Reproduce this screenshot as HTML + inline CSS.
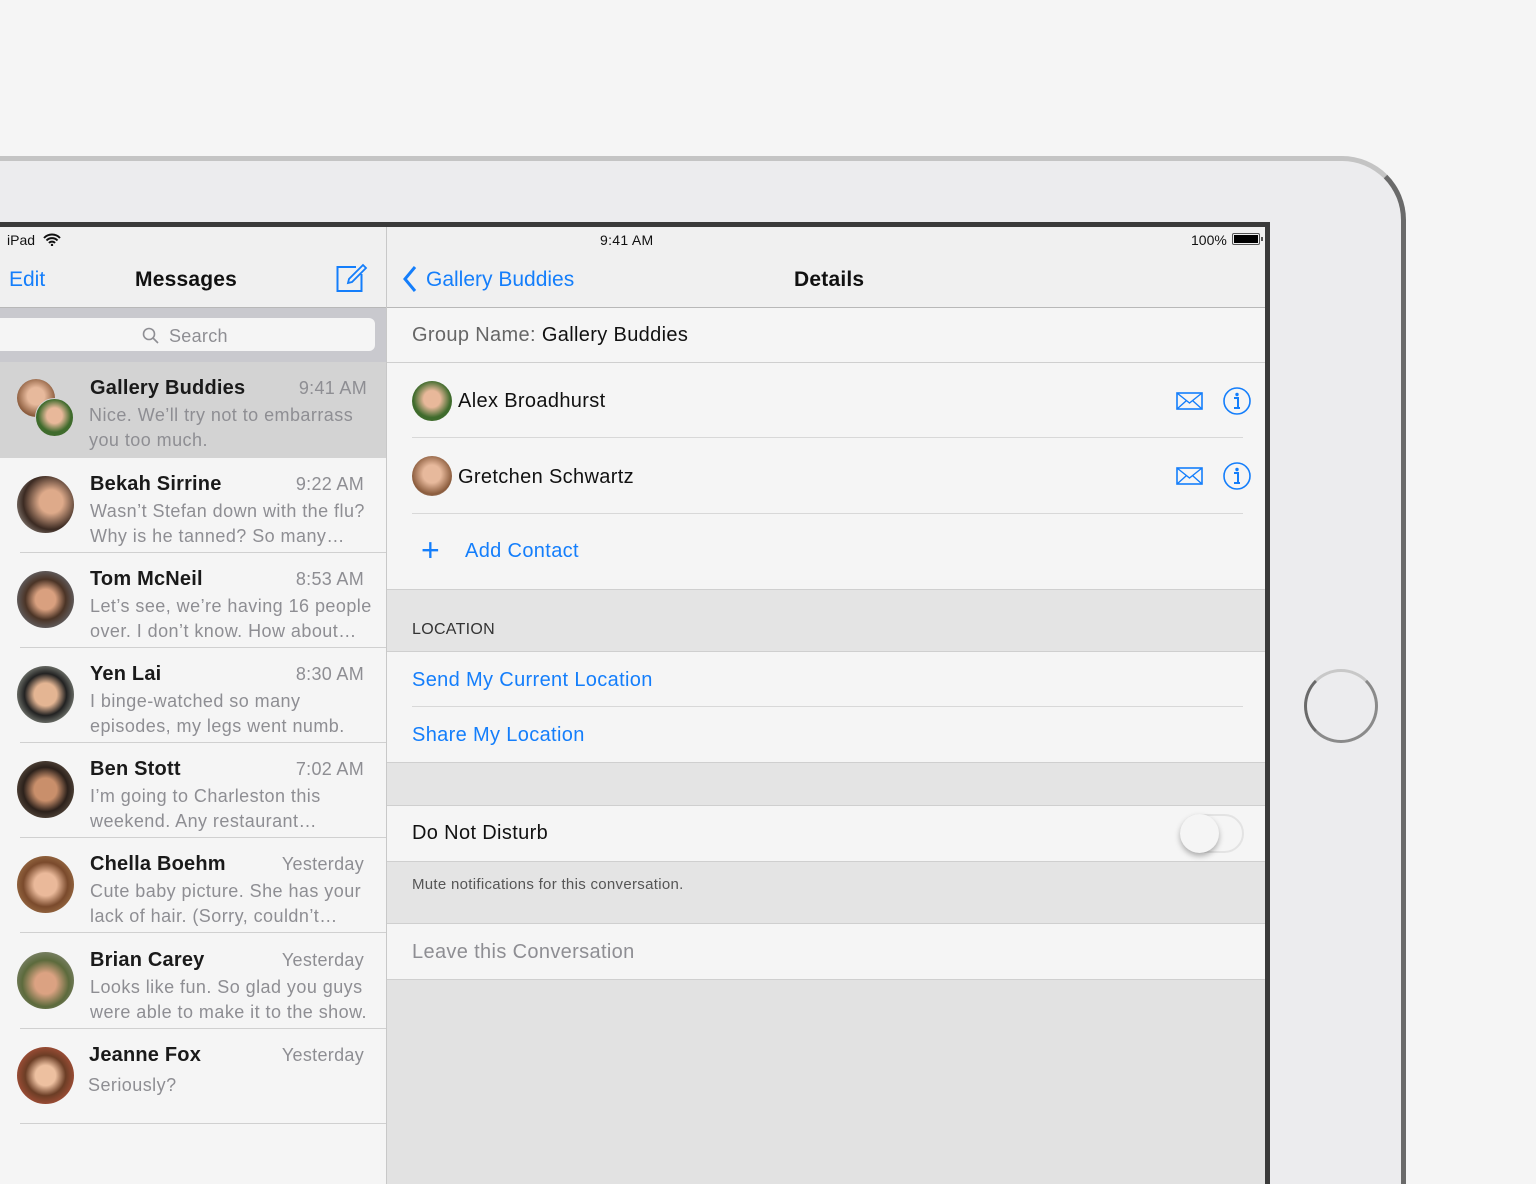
<!DOCTYPE html>
<html style="width:1536px;height:1184px;overflow:hidden"><head><meta charset="utf-8"><style>
*{margin:0;padding:0;box-sizing:border-box}
body{width:1536px;height:1184px;background:#f5f5f5;position:relative;overflow:hidden;font-family:"Liberation Sans",sans-serif;color:#111}
.abs{position:absolute}
#body{left:-80px;top:156px;width:1486px;height:1028px;background:#ececee;border-radius:0 64px 0 0;border-top:5px solid #c4c4c4;border-right:5px solid #6a6a6a}
#screen{left:-10px;top:222px;width:1280px;height:962px;background:#3a3a3a}
#scr{left:0;top:227px;width:1265px;height:957px;background:#f5f5f5;overflow:hidden}
.blue{color:#147efb}
.gray{color:#8e8e93}
.row{position:absolute;left:0;width:386px;height:95px}
.row .av{position:absolute;left:17px;top:18px;width:57px;height:57px;border-radius:50%}
.row .n{position:absolute;left:90px;top:15px;font-size:20px;font-weight:bold;color:#1a1a1a;letter-spacing:0.2px}
.row .t{position:absolute;right:22px;top:16px;font-size:18px;color:#8e8e93;letter-spacing:0.3px}
.row .p{position:absolute;left:90px;top:41px;font-size:18px;line-height:25px;color:#8e8e93;width:290px;letter-spacing:0.45px}
.row .sep{position:absolute;left:20px;right:0;bottom:0;height:1px;background:#d0d0d0}
.cell{position:absolute;left:387px;width:878px;background:#f5f5f5}
.grp{position:absolute;left:387px;width:878px;background:#e4e4e4;border-top:1px solid #cfcfcf;border-bottom:1px solid #cfcfcf}
.ctext{position:absolute;left:25px;font-size:20px;letter-spacing:0.35px}
</style></head><body>
<div id="body" class="abs"></div>
<div class="abs" style="left:1304px;top:669px;width:74px;height:74px;border-radius:50%;border:3px solid #8a8a8a;border-top-color:#c8c8c8;border-left-color:#6a6a6a"></div>
<div id="screen" class="abs"></div>
<div id="scr" class="abs">
  <div class="abs" style="left:0;top:0;width:386px;height:81px;background:#f0f0f0;border-bottom:1px solid #b8b8b8"></div>
  <div class="abs" style="left:7px;top:5px;font-size:14px">iPad</div>
  <svg class="abs" style="left:43px;top:6px" width="18" height="13" viewBox="0 0 18 13"><path d="M1 5a11 11 0 0 1 16 0M3.5 7.5a7.5 7.5 0 0 1 11 0M6 10a4 4 0 0 1 6 0" stroke="#111" stroke-width="2" fill="none"/><circle cx="9" cy="12" r="1.2" fill="#111"/></svg>
  <div class="abs blue" style="left:9px;top:41px;font-size:21px">Edit</div>
  <div class="abs" style="left:135px;top:41px;font-size:21px;font-weight:bold;letter-spacing:0.2px">Messages</div>
  <svg class="abs" style="left:336px;top:36px" width="32" height="32" viewBox="0 0 32 32"><path d="M20 4H1.5v24H25.5V11" stroke="#147efb" stroke-width="2" fill="none"/><path d="M12 20l1-4L27 2l3 3-14 14z" stroke="#147efb" stroke-width="1.8" fill="none"/></svg>
  <div class="abs" style="left:0;top:81px;width:386px;height:54px;background:#c9c9ce"></div>
  <div class="abs" style="left:0;top:91px;width:375px;height:33px;background:#f5f5f5;border-radius:0 6px 6px 0"></div>
  <svg class="abs" style="left:142px;top:100px" width="18" height="18" viewBox="0 0 18 18"><circle cx="7" cy="7" r="5.5" stroke="#8e8e93" stroke-width="1.6" fill="none"/><path d="M11 11l5 5" stroke="#8e8e93" stroke-width="1.6"/></svg>
  <div class="abs gray" style="left:169px;top:99px;font-size:18px;letter-spacing:0.3px">Search</div>
  <div class="abs" style="left:386px;top:0;width:1px;height:957px;background:#c8c8c8"></div>

  <div class="row" style="top:135px;height:96px;background:#d3d3d3">
    <div class="abs" style="left:17px;top:17px;width:38px;height:38px;border-radius:50%;background:radial-gradient(circle at 50% 45%,#e7b99c 30%,#8a5b3c 70%)"></div>
    <div class="abs" style="left:35px;top:36px;width:39px;height:39px;border-radius:50%;background:radial-gradient(circle at 50% 45%,#e8b89a 28%,#3f6b2c 60%);border:1.5px solid #d3d3d3"></div>
    <div class="n">Gallery Buddies</div><div class="t" style="right:19px">9:41 AM</div>
    <div class="p" style="left:89px">Nice. We’ll try not to embarrass you too much.</div>
  </div>
  <div class="row" style="top:231px"><div class="av" style="background:radial-gradient(circle at 60% 45%,#deaa8a 25%,#3b2a22 60%,#c9c4bc)"></div><div class="n">Bekah Sirrine</div><div class="t">9:22 AM</div><div class="p">Wasn’t Stefan down with the flu? Why is he tanned? So many…</div><div class="sep"></div></div>
  <div class="row" style="top:326px"><div class="av" style="background:radial-gradient(circle at 50% 50%,#d9a07f 25%,#4b3426 50%,#7a8da0)"></div><div class="n">Tom McNeil</div><div class="t">8:53 AM</div><div class="p">Let’s see, we’re having 16 people over. I don’t know. How about…</div><div class="sep"></div></div>
  <div class="row" style="top:421px"><div class="av" style="background:radial-gradient(circle at 50% 50%,#e4b593 28%,#222 52%,#cfd6c6)"></div><div class="n">Yen Lai</div><div class="t">8:30 AM</div><div class="p">I binge-watched so many episodes, my legs went numb.</div><div class="sep"></div></div>
  <div class="row" style="top:516px"><div class="av" style="background:radial-gradient(circle at 50% 50%,#c98f6b 28%,#2c211b 55%,#7f7060)"></div><div class="n">Ben Stott</div><div class="t">7:02 AM</div><div class="p">I’m going to Charleston this weekend. Any restaurant…</div><div class="sep"></div></div>
  <div class="row" style="top:611px"><div class="av" style="background:radial-gradient(circle at 50% 50%,#eab99a 28%,#7a4a2c 55%,#b58a5a)"></div><div class="n">Chella Boehm</div><div class="t">Yesterday</div><div class="p">Cute baby picture. She has your lack of hair. (Sorry, couldn’t…</div><div class="sep"></div></div>
  <div class="row" style="top:707px"><div class="av" style="background:radial-gradient(circle at 50% 55%,#dba282 25%,#5c6a3c 55%,#9b9b94)"></div><div class="n">Brian Carey</div><div class="t">Yesterday</div><div class="p">Looks like fun. So glad you guys were able to make it to the show.</div><div class="sep"></div></div>
  <div class="row" style="top:802px"><div class="av" style="background:radial-gradient(circle at 50% 50%,#edc0a0 25%,#6b3d25 50%,#d8604a)"></div><div class="n" style="left:89px">Jeanne Fox</div><div class="t">Yesterday</div><div class="p" style="left:88px;top:44px">Seriously?</div><div class="sep"></div></div>

  <div class="abs" style="left:387px;top:0;width:878px;height:81px;background:#f0f0f0;border-bottom:1px solid #b8b8b8"></div>
  <div class="abs" style="left:600px;top:5px;font-size:14px;letter-spacing:0.3px">9:41 AM</div>
  <div class="abs" style="left:1191px;top:5px;font-size:14px">100%</div>
  <div class="abs" style="left:1232px;top:6px;width:28px;height:12px;border:1px solid #555;border-radius:2px;padding:1px"><div style="width:100%;height:100%;background:#000"></div></div>
  <div class="abs" style="left:1261px;top:10px;width:2px;height:4px;background:#555"></div>
  <svg class="abs" style="left:402px;top:38px" width="16" height="28" viewBox="0 0 16 28"><path d="M13 2L3 14l10 12" stroke="#147efb" stroke-width="3" fill="none"/></svg>
  <div class="abs blue" style="left:426px;top:41px;font-size:21px">Gallery Buddies</div>
  <div class="abs" style="left:794px;top:41px;font-size:21px;font-weight:bold;letter-spacing:0.2px">Details</div>

  <div class="cell" style="top:81px;height:55px;border-bottom:1px solid #cfcfcf"><div class="ctext" style="top:16px"><span style="color:#666">Group Name:</span> Gallery Buddies</div></div>
  <div class="cell" style="top:136px;height:226px">
    <div class="abs" style="left:25px;top:18px;width:40px;height:40px;border-radius:50%;background:radial-gradient(circle at 50% 45%,#e8b89a 28%,#3f6b2c 62%)"></div>
    <div class="ctext" style="left:71px;top:27px">Alex Broadhurst</div>
    <div class="abs" style="left:25px;right:22px;top:74px;height:1px;background:#d8d8d8"></div>
    <div class="abs" style="left:25px;top:93px;width:40px;height:40px;border-radius:50%;background:radial-gradient(circle at 50% 45%,#e7b99c 30%,#8a5b3c 68%,#ccc)"></div>
    <div class="ctext" style="left:71px;top:103px">Gretchen Schwartz</div>
    <div class="abs" style="left:25px;right:22px;top:150px;height:1px;background:#d8d8d8"></div>
    <div class="abs blue" style="left:34px;top:171px;font-size:32px;line-height:32px;font-weight:300">+</div>
    <div class="ctext blue" style="left:78px;top:177px">Add Contact</div>
  </div>
  <svg class="abs" style="left:1176px;top:165px" width="27" height="18" viewBox="0 0 27 18"><rect x="1" y="1" width="25" height="16" stroke="#147efb" stroke-width="1.6" fill="none"/><path d="M1 1l12.5 10L26 1M1 17l9-8M26 17l-9-8" stroke="#147efb" stroke-width="1.4" fill="none"/></svg>
  <svg class="abs" style="left:1222px;top:159px" width="30" height="30" viewBox="0 0 30 30"><circle cx="15" cy="15" r="13" stroke="#147efb" stroke-width="1.6" fill="none"/><circle cx="15" cy="8.5" r="1.7" fill="#147efb"/><path d="M12 12h4v10M12 22h6" stroke="#147efb" stroke-width="2" fill="none"/></svg>
  <svg class="abs" style="left:1176px;top:240px" width="27" height="18" viewBox="0 0 27 18"><rect x="1" y="1" width="25" height="16" stroke="#147efb" stroke-width="1.6" fill="none"/><path d="M1 1l12.5 10L26 1M1 17l9-8M26 17l-9-8" stroke="#147efb" stroke-width="1.4" fill="none"/></svg>
  <svg class="abs" style="left:1222px;top:234px" width="30" height="30" viewBox="0 0 30 30"><circle cx="15" cy="15" r="13" stroke="#147efb" stroke-width="1.6" fill="none"/><circle cx="15" cy="8.5" r="1.7" fill="#147efb"/><path d="M12 12h4v10M12 22h6" stroke="#147efb" stroke-width="2" fill="none"/></svg>

  <div class="grp" style="top:362px;height:63px"><div class="abs" style="left:25px;top:31px;font-size:16px;color:#333;letter-spacing:0.3px">LOCATION</div></div>
  <div class="cell" style="top:425px;height:110px">
    <div class="ctext blue" style="top:17px">Send My Current Location</div>
    <div class="abs" style="left:25px;right:22px;top:54px;height:1px;background:#d8d8d8"></div>
    <div class="ctext blue" style="top:72px">Share My Location</div>
  </div>
  <div class="grp" style="top:535px;height:44px"></div>
  <div class="cell" style="top:579px;height:55px">
    <div class="ctext" style="top:16px">Do Not Disturb</div>
    <div class="abs" style="left:793px;top:8px;width:64px;height:39px;border-radius:20px;border:2px solid #e3e3e3;background:#f5f5f5"></div>
    <div class="abs" style="left:793px;top:8px;width:39px;height:39px;border-radius:50%;background:#f5f5f5;box-shadow:0 3px 6px rgba(0,0,0,.3)"></div>
  </div>
  <div class="grp" style="top:634px;height:63px"><div class="abs" style="left:25px;top:14px;font-size:15px;color:#555;letter-spacing:0.3px">Mute notifications for this conversation.</div></div>
  <div class="cell" style="top:697px;height:55px"><div class="ctext" style="top:17px;color:#8e8e93">Leave this Conversation</div></div>
  <div class="grp" style="top:752px;height:220px;border-bottom:none;background:#e2e2e2"></div>
</div>
</body></html>
